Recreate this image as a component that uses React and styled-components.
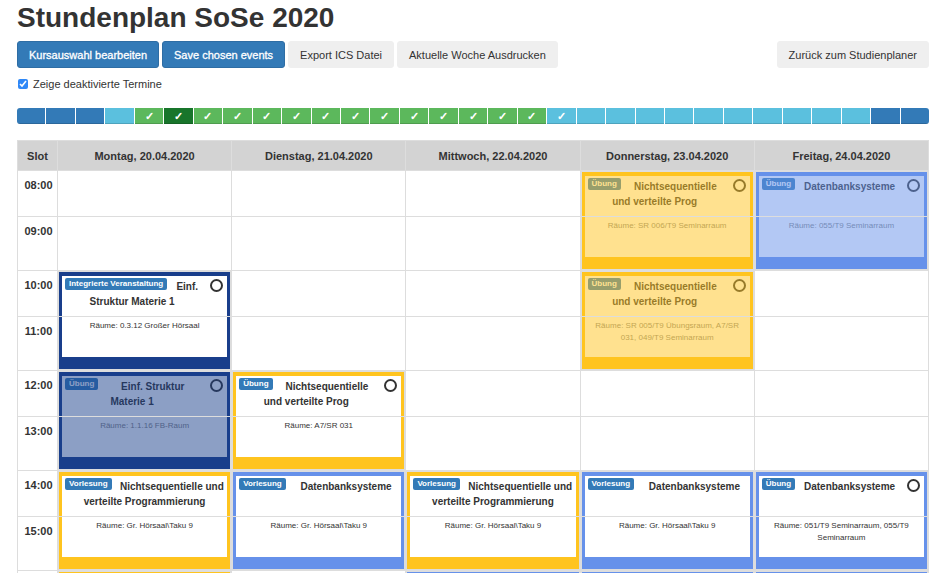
import { Fragment, useState } from "react";
import styled, { createGlobalStyle } from "styled-components";

const yellow = "#ffc41f";
const blue = "#6691ea";
const navy = "#193e8b";

const days = [
  "Montag, 20.04.2020",
  "Dienstag, 21.04.2020",
  "Mittwoch, 22.04.2020",
  "Donnerstag, 23.04.2020",
  "Freitag, 24.04.2020",
];

// one letter per week: b = break, i = inactive, g = has events, c = current,
// x = inactive but with events
const weeks = "bbbigcggggggggggggxiiiiiiiiiibb".split("");

// each block covers two hours, events are listed from monday to friday
const blocks = [
  {
    times: ["08:00", "09:00"],
    events: [
      null,
      null,
      null,
      {
        color: yellow,
        type: "Übung",
        title: "Nichtsequentielle und verteilte Prog",
        rooms: "SR 006/T9 Seminarraum",
        choice: true,
        disabled: true,
      },
      {
        color: blue,
        type: "Übung",
        title: "Datenbanksysteme",
        rooms: "055/T9 Seminarraum",
        choice: true,
        disabled: true,
      },
    ],
  },
  {
    times: ["10:00", "11:00"],
    events: [
      {
        color: navy,
        type: "Integrierte Veranstaltung",
        title: "Einf. Struktur Materie 1",
        rooms: "0.3.12 Großer Hörsaal",
        choice: true,
      },
      null,
      null,
      {
        color: yellow,
        type: "Übung",
        title: "Nichtsequentielle und verteilte Prog",
        rooms: "SR 005/T9 Übungsraum, A7/SR 031, 049/T9 Seminarraum",
        choice: true,
        disabled: true,
      },
      null,
    ],
  },
  {
    times: ["12:00", "13:00"],
    events: [
      {
        color: navy,
        type: "Übung",
        title: "Einf. Struktur Materie 1",
        rooms: "1.1.16 FB-Raum",
        choice: true,
        disabled: true,
      },
      {
        color: yellow,
        type: "Übung",
        title: "Nichtsequentielle und verteilte Prog",
        rooms: "A7/SR 031",
        choice: true,
      },
      null,
      null,
      null,
    ],
  },
  {
    times: ["14:00", "15:00"],
    events: [
      {
        color: yellow,
        type: "Vorlesung",
        title: "Nichtsequentielle und verteilte Programmierung",
        rooms: "Gr. Hörsaal\\Taku 9",
      },
      {
        color: blue,
        type: "Vorlesung",
        title: "Datenbanksysteme",
        rooms: "Gr. Hörsaal\\Taku 9",
      },
      {
        color: yellow,
        type: "Vorlesung",
        title: "Nichtsequentielle und verteilte Programmierung",
        rooms: "Gr. Hörsaal\\Taku 9",
      },
      {
        color: blue,
        type: "Vorlesung",
        title: "Datenbanksysteme",
        rooms: "Gr. Hörsaal\\Taku 9",
      },
      {
        color: blue,
        type: "Übung",
        title: "Datenbanksysteme",
        rooms: "051/T9 Seminarraum, 055/T9 Seminarraum",
        choice: true,
      },
    ],
  },
  {
    times: ["", ""],
    events: [{ color: yellow }, null, { color: blue }, { color: blue }, { color: blue }],
  },
];

const Event = ({ event }) => {
  return (
    <EventBox $color={event.color}>
      {event.title && (
        <EventBody $disabled={event.disabled}>
          <Title>
            <Badge>{event.type}</Badge>
            {event.choice && (
              <Choice type="radio" aria-label={event.title} />
            )}
            {event.title}
          </Title>
          <Rooms $disabled={event.disabled}>Räume: {event.rooms}</Rooms>
        </EventBody>
      )}
    </EventBox>
  );
};

const App = () => {
  const [showDisabled, setShowDisabled] = useState(true);

  const isVisible = (event) => event && (showDisabled || !event.disabled);

  return (
    <Page>
      <GlobalStyle />
      <Heading>Stundenplan SoSe 2020</Heading>
      <Toolbar>
        <Button $primary>Kursauswahl bearbeiten</Button>
        <Button $primary>Save chosen events</Button>
        <Button>Export ICS Datei</Button>
        <Button>Aktuelle Woche Ausdrucken</Button>
        <Spacer />
        <Button>Zurück zum Studienplaner</Button>
      </Toolbar>
      <CheckLabel>
        <Checkbox
          type="checkbox"
          checked={showDisabled}
          onChange={(e) => setShowDisabled(e.target.checked)}
        />
        Zeige deaktivierte Termine
      </CheckLabel>
      <Weeks>
        {weeks.map((week, index) => (
          <Week key={index} $kind={week}>
            {"gcx".includes(week) && "✓"}
          </Week>
        ))}
      </Weeks>
      <Table>
        <thead>
          <tr>
            <SlotHead>Slot</SlotHead>
            {days.map((day) => (
              <DayHead key={day}>{day}</DayHead>
            ))}
          </tr>
        </thead>
        <tbody>
          {blocks.map((block, index) => (
            <Fragment key={index}>
              <HourRow $height={46}>
                <Time>{block.times[0]}</Time>
                {block.events.map((event, i) =>
                  isVisible(event) ? (
                    <EventCell key={i} rowSpan={2}>
                      <Event event={event} />
                    </EventCell>
                  ) : (
                    <Cell key={i} />
                  )
                )}
              </HourRow>
              <HourRow $height={54}>
                <Time>{block.times[1]}</Time>
                {block.events.map((event, i) =>
                  isVisible(event) ? null : <Cell key={i} />
                )}
              </HourRow>
            </Fragment>
          ))}
        </tbody>
      </Table>
    </Page>
  );
};

const weekColors = {
  b: "#337ab7",
  i: "#5bc0de",
  x: "#5bc0de",
  g: "#5cb85c",
  c: "#18752b",
};

const GlobalStyle = createGlobalStyle`
  * {
    box-sizing: border-box;
  }
  body {
    margin: 0;
    background: #fff;
    color: #333;
    font-family: "Liberation Sans", Arial, sans-serif;
    font-size: 11px;
    line-height: 20px;
  }
  button {
    font-family: inherit;
  }
`;
const Page = styled.div`
  padding: 0 11px 0 17px;
`;
const Heading = styled.h1`
  margin: 0;
  padding: 2px 0 7px;
  font-size: 28px;
  line-height: 32px;
  font-weight: bold;
`;
const Toolbar = styled.div`
  display: flex;
  gap: 3px;
`;
const Spacer = styled.div`
  flex: 1;
`;
const Button = styled.button`
  height: 27px;
  padding: 0 11px;
  border: 1px solid ${(props) => (props.$primary ? "#2e6da4" : "#efefef")};
  border-radius: 3px;
  background: ${(props) => (props.$primary ? "#337ab7" : "#efefef")};
  color: ${(props) => (props.$primary ? "#fff" : "#333")};
  font-size: 11px;
  cursor: pointer;
  -webkit-text-stroke: ${(props) => (props.$primary ? "0.3px #fff" : "0")};
`;
const CheckLabel = styled.label`
  display: flex;
  align-items: center;
  gap: 5px;
  margin: 6px 0 14px;
`;
const Checkbox = styled.input`
  width: 10px;
  height: 10px;
  margin: 0 0 0 1px;
  accent-color: #2f88f7;
`;
const Weeks = styled.div`
  display: flex;
  gap: 1px;
  height: 16px;
  border-radius: 3px;
  overflow: hidden;
`;
const Week = styled.button`
  flex: 1;
  padding: 0;
  border: none;
  background: ${(props) => weekColors[props.$kind]};
  box-shadow: inset 0 -1px 0 rgba(0, 0, 0, 0.15);
  color: #fff;
  font-size: 11px;
  font-weight: bold;
  line-height: 16px;
  cursor: pointer;
`;
const Table = styled.table`
  width: 100%;
  margin-top: 16px;
  table-layout: fixed;
  border-collapse: collapse;
`;
const SlotHead = styled.th`
  width: 40px;
  height: 30px;
  padding: 0;
  border: 1px solid #ddd;
  background: #d3d3d3;
`;
const DayHead = styled.th`
  padding: 0;
  border: 1px solid #ddd;
  background: #d3d3d3;
`;
const HourRow = styled.tr`
  height: ${(props) => props.$height}px;
`;
const Time = styled.th`
  padding: 4px 0 0 2px;
  border: 1px solid #ddd;
  vertical-align: top;
`;
const Cell = styled.td`
  padding: 0;
  border: 1px solid #ddd;
`;
const EventCell = styled.td`
  padding: 1px;
  border: 1px solid #ddd;
  background: #ddd;
  vertical-align: top;
`;
const EventBox = styled.div`
  position: relative;
  min-height: 97px;
  padding: 4px 3px 12px;
  background: ${(props) => props.$color};

  /* hour line that runs over the event */
  &::after {
    content: "";
    position: absolute;
    top: 44px;
    left: 0;
    right: 0;
    height: 1px;
    background: #ddd;
  }
`;
const EventBody = styled.div`
  min-height: 81px;
  background: #fff;
  opacity: ${(props) => (props.$disabled ? 0.5 : 1)};
  text-align: center;
`;
const Title = styled.div`
  min-height: 44px;
  padding-top: 3px;
  font-size: 10px;
  font-weight: bold;
  line-height: 15px;
`;
const Badge = styled.span`
  float: left;
  margin: -1px 5px 0 3px;
  padding: 0 4px;
  border-radius: 2px;
  background: #337ab7;
  color: #fff;
  font-size: 8px;
  line-height: 12px;
`;
const Choice = styled.input`
  float: right;
  appearance: none;
  width: 13px;
  height: 13px;
  margin: 0 4px 4px 8px;
  border: 2px solid #333;
  border-radius: 50%;
  cursor: pointer;

  &:checked {
    background: #333;
  }
`;
const Rooms = styled.div`
  padding: 0 10px;
  font-size: 8px;
  line-height: 12px;
  opacity: ${(props) => (props.$disabled ? 0.6 : 1)};
`;

export default App;
